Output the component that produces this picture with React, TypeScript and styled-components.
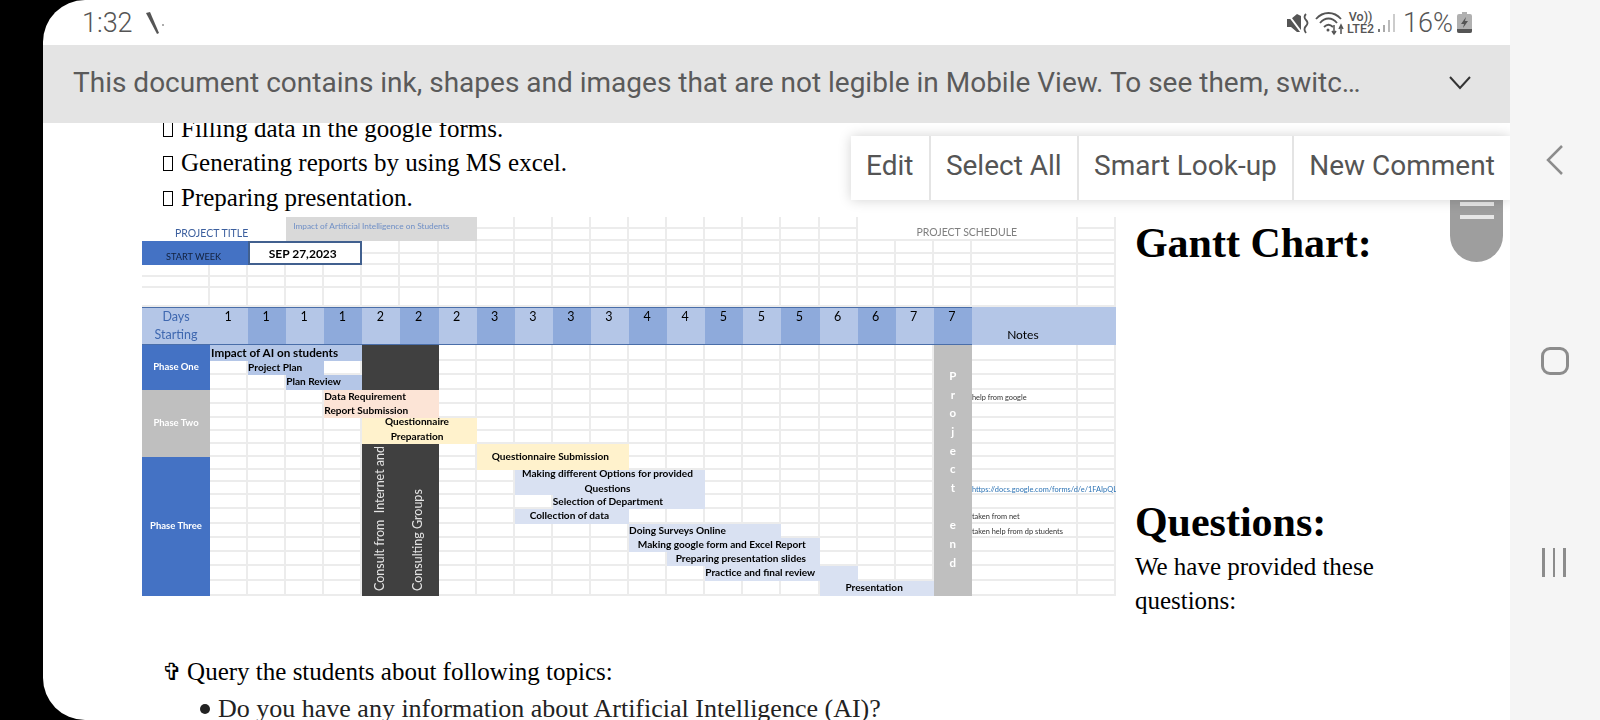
import React from 'react';
import styled, { createGlobalStyle } from 'styled-components';

const GRID_ROWS = [12, 12, 13, 11, 12, 11, 19, 38, 16, 14, 15, 14, 14, 13, 13, 13, 13, 12, 13, 14, 15, 14, 14, 14, 15, 15];
const DAYS = [1, 1, 1, 1, 2, 2, 2, 3, 3, 3, 3, 4, 4, 5, 5, 5, 6, 6, 7, 7];
const PROJECT_END = ['P', 'r', 'o', 'j', 'e', 'c', 't', '\u00a0', 'e', 'n', 'd'];

type Bar = { col: string; row: string; bg: string; align?: string; lines: string[] };

const LIGHT = '#b4c6e7';
const PEACH = '#fce4d6';
const CREAM = '#fff2cc';
const PALE = '#d9e1f2';

const BARS: Bar[] = [
  { col: '3 / 5', row: '10 / 11', bg: LIGHT, align: 'left', lines: ['Project Plan'] },
  { col: '4 / 6', row: '11 / 12', bg: LIGHT, align: 'left', lines: ['Plan Review'] },
  { col: '5 / 8', row: '12 / 13', bg: PEACH, align: 'left', lines: ['Data Requirement'] },
  { col: '5 / 8', row: '13 / 14', bg: PEACH, align: 'left', lines: ['Report Submission'] },
  { col: '6 / 9', row: '14 / 16', bg: CREAM, lines: ['Questionnaire', 'Preparation'] },
  { col: '9 / 13', row: '16 / 18', bg: CREAM, lines: ['Questionnaire Submission'] },
  { col: '10 / 15', row: '18 / 20', bg: PALE, lines: ['Making different Options for provided', 'Questions'] },
  { col: '11 / 15', row: '20 / 21', bg: PALE, align: 'left', lines: ['Selection of Department'] },
  { col: '10 / 13', row: '21 / 22', bg: PALE, lines: ['Collection of data'] },
  { col: '13 / 17', row: '22 / 23', bg: PALE, align: 'left', lines: ['Doing Surveys Online'] },
  { col: '13 / 18', row: '23 / 24', bg: PALE, lines: ['Making google form and Excel Report'] },
  { col: '14 / 18', row: '24 / 25', bg: PALE, lines: ['Preparing presentation slides'] },
  { col: '15 / 19', row: '25 / 26', bg: PALE, align: 'left', lines: ['Practice and final review'] },
  { col: '18 / 21', row: '26 / 27', bg: PALE, lines: ['Presentation'] },
];

const NOTES = [
  { row: '12 / 13', text: 'help from google' },
  { row: '19 / 20', text: 'https://docs.google.com/forms/d/e/1FAIpQLSc', link: true },
  { row: '21 / 22', text: 'taken from net' },
  { row: '22 / 23', text: 'taken help from dp students' },
];

const GlobalStyle = createGlobalStyle`
  html, body {
    margin: 0;
    height: 720px;
    background: #000;
    overflow: hidden;
  }
`;

const Screen = styled.div`
  display: flex;
  width: 1557px;
  height: 720px;
  margin-left: 43px;
  background: #fff;
  border-radius: 42px 0 0 42px;
  overflow: hidden;
  font-family: Roboto, sans-serif;
`;

const Main = styled.div`
  display: flex;
  flex-direction: column;
  width: 1467px;
  flex: none;
`;

const StatusBar = styled.div`
  display: flex;
  align-items: center;
  height: 45px;
  flex: none;
  padding: 0 38px 0 39px;
  color: #555;
`;

const Clock = styled.span`
  font-size: 27px;
  font-weight: 300;
  margin-right: 11px;
`;

const StatusRight = styled.div`
  display: flex;
  align-items: center;
  margin-left: auto;
`;

const Volte = styled.span`
  display: flex;
  flex-direction: column;
  align-items: center;
  font-size: 12.5px;
  font-weight: 500;
  line-height: 12px;
  margin: 0 3px 0 0;
`;

const Percent = styled.span`
  font-size: 27px;
  font-weight: 300;
  margin: 0 4px 0 8px;
`;

const Banner = styled.div`
  display: flex;
  align-items: center;
  justify-content: space-between;
  box-sizing: border-box;
  height: 78px;
  flex: none;
  padding: 0 39px 3px 30px;
  background: #e4e4e4;
  color: #5a5a5a;
  font-size: 28px;
  position: relative;
  z-index: 2;
`;

const Doc = styled.div`
  position: relative;
  flex: 1;
  overflow: hidden;
  color: #000;
  font-family: 'Liberation Serif', serif;
`;

const TopList = styled.div`
  margin: -11px 0 0 121px;
  font-size: 25px;
  line-height: 34.4px;
`;

const Tofu = styled.span`
  display: inline-block;
  box-sizing: border-box;
  width: 10px;
  height: 15px;
  margin: 0 8px 0 -1px;
  border: 1px solid #000;
`;

const ChartRow = styled.div`
  display: flex;
  align-items: flex-start;
  gap: 19px;
  margin: 2px 0 0 99px;
`;

const Chart = styled.div`
  display: grid;
  grid-template-columns: 68px repeat(20, 38.1px) 106px 38px;
  grid-template-rows: ${GRID_ROWS.map((h) => `${h}px`).join(' ')};
  flex: none;
  overflow: hidden;
  font-family: Lato, sans-serif;
  color: #000;
  filter: blur(0.3px);
`;

const Cell = styled.div<{ $col: number; $row: number }>`
  grid-column: ${(p) => p.$col};
  grid-row: ${(p) => p.$row};
  border-right: 2px solid #ececec;
  border-bottom: 2px solid #ececec;
`;

const TitleCell = styled.div`
  grid-column: 1 / 4;
  grid-row: 1 / 3;
  display: flex;
  align-items: flex-end;
  padding: 0 0 2px 33px;
  background: #fff;
  color: #3c5f9e;
  font-size: 10.5px;
`;

const TitleValue = styled.div`
  grid-column: 4 / 9;
  grid-row: 1 / 3;
  padding: 4px 0 0 7px;
  background: #d9d9d9;
  color: #6f8fc6;
  font-size: 8.3px;
`;

const ScheduleCell = styled.div`
  grid-column: 19 / 23;
  grid-row: 1 / 3;
  display: flex;
  align-items: flex-end;
  justify-content: center;
  padding: 0 0 1px 0;
  background: #fff;
  border-right: 2px solid #ececec;
  border-bottom: 2px solid #ececec;
  color: #7f7f7f;
  font-size: 10.5px;
`;

const StartWeek = styled.div`
  grid-column: 1 / 3;
  grid-row: 3 / 5;
  display: flex;
  align-items: flex-end;
  padding: 0 0 3px 24px;
  background: #4472c4;
  color: #12203c;
  font-size: 9.2px;
`;

const StartDate = styled.div`
  grid-column: 3 / 6;
  grid-row: 3 / 5;
  display: flex;
  align-items: center;
  justify-content: center;
  padding-right: 5px;
  background: #fff;
  border: 2px solid #41608f;
  font-size: 12px;
  font-weight: 700;
`;

const DaysHead = styled.div`
  grid-column: 1;
  grid-row: 8;
  display: flex;
  flex-direction: column;
  align-items: center;
  background: ${LIGHT};
  border-top: 1px solid #4a6ea9;
  border-bottom: 1px solid #4a6ea9;
  color: #3f68b0;
  font-size: 12.5px;
  line-height: 18px;
`;

const DayCell = styled.div<{ $dark: boolean }>`
  grid-row: 8;
  padding-right: 2px;
  text-align: center;
  background: ${(p) => (p.$dark ? '#8eaadb' : LIGHT)};
  border-top: 1px solid #4a6ea9;
  border-bottom: 1px solid #4a6ea9;
  font-size: 12.5px;
  line-height: 17px;
`;

const NotesHead = styled.div`
  grid-column: 22 / 24;
  grid-row: 8;
  display: flex;
  align-items: flex-end;
  justify-content: center;
  padding: 0 42px 1px 0;
  background: ${LIGHT};
  font-size: 12px;
  line-height: 18px;
`;

const Phase = styled.div<{ $rows: string; $bg: string }>`
  grid-column: 1;
  grid-row: ${(p) => p.$rows};
  display: flex;
  align-items: center;
  justify-content: center;
  padding-bottom: 2px;
  background: ${(p) => p.$bg};
  color: #fff;
  font-size: 9.5px;
  font-weight: 700;
`;

const GanttBar = styled.div<{ $col: string; $row: string; $bg: string; $align?: string }>`
  grid-column: ${(p) => p.$col};
  grid-row: ${(p) => p.$row};
  display: flex;
  flex-direction: column;
  justify-content: space-around;
  padding: 0 ${(p) => (p.$align ? 0 : 5)}px 2px 0;
  text-align: ${(p) => p.$align || 'center'};
  background: ${(p) => p.$bg};
  font-size: 10.1px;
  font-weight: 700;
  line-height: 13px;
  white-space: nowrap;
`;

const TwoLineBar = styled(GanttBar)`
  justify-content: flex-start;
  gap: 1.5px;
  padding-bottom: 0;
  & > span:first-child {
    margin-top: -3px;
  }
`;

const MainBar = styled.div`
  grid-column: 2 / 6;
  grid-row: 9;
  background: ${LIGHT};
  padding-left: 1px;
  font-size: 11.7px;
  font-weight: 700;
  line-height: 14px;
`;

const DarkBlock = styled.div<{ $rows: string }>`
  grid-column: 6 / 8;
  grid-row: ${(p) => p.$rows};
  background: #404040;
`;

const VerticalLabel = styled.div<{ $col: number }>`
  grid-column: ${(p) => p.$col};
  grid-row: 16 / 27;
  display: flex;
  align-items: center;
  justify-content: flex-start;
  padding: 5px 0 0 3px;
  color: #e4e4e4;
  font-size: 12.5px;
  line-height: 14px;
  white-space: pre;
  writing-mode: vertical-rl;
  transform: rotate(180deg);
`;

const EndColumn = styled.div`
  grid-column: 21;
  grid-row: 9 / 27;
  display: flex;
  flex-direction: column;
  align-items: center;
  justify-content: center;
  padding-bottom: 2px;
  background: #bfbfbf;
  color: #fff;
  font-size: 11.5px;
  font-weight: 700;
  line-height: 18.7px;
`;

const Note = styled.div<{ $row: string; $link?: boolean }>`
  grid-column: 22 / 24;
  grid-row: ${(p) => p.$row};
  overflow: hidden;
  padding-top: 1px;
  color: ${(p) => (p.$link ? '#2e74b5' : '#333')};
  font-size: 7.4px;
  line-height: 13px;
  white-space: nowrap;
`;

const Side = styled.div`
  display: flex;
  flex-direction: column;
  width: 300px;
  flex: none;
  margin-top: -1px;
  font-size: 25px;
`;

const SideTitle = styled.h2<{ $gap?: number }>`
  margin: ${(p) => p.$gap || 0}px 0 0;
  font-size: 42px;
  font-weight: 700;
  line-height: 55px;
`;

const SideText = styled.p`
  margin: 0;
  line-height: 34px;
`;

const QueryList = styled.div`
  margin: 35px 0 0 121px;
  font-size: 25px;
  line-height: 37px;
`;

const CrossMark = styled.span`
  font-family: 'DejaVu Sans', sans-serif;
  font-size: 24px;
  line-height: 1;
  margin: 0 5px 0 -2px;
`;

const BulletLine = styled.div`
  display: flex;
  align-items: center;
  margin-left: 36px;
  color: #222;
  font-size: 26px;
`;

const Dot = styled.span`
  width: 10px;
  height: 10px;
  margin-right: 8px;
  border-radius: 50%;
  background: #222;
`;

const Thumb = styled.div`
  position: absolute;
  top: 67px;
  right: 7px;
  display: flex;
  flex-direction: column;
  align-items: center;
  gap: 9px;
  box-sizing: border-box;
  width: 53px;
  height: 72px;
  padding-top: 12px;
  background: #9e9e9e;
  border-radius: 0 0 27px 27px;
`;

const ThumbLine = styled.span`
  width: 34px;
  height: 4px;
  background: #e6e6e6;
`;

const Menu = styled.div`
  position: absolute;
  top: 13px;
  right: 0;
  display: flex;
  height: 64px;
  background: #fff;
  box-shadow: 0 0 12px rgba(0, 0, 0, 0.18);
  font-family: Roboto, sans-serif;
`;

const MenuItem = styled.div`
  display: flex;
  align-items: center;
  padding: 0 15.2px 5px;
  border-left: 2px solid #e4e4e4;
  color: #555;
  font-size: 28px;
  white-space: nowrap;
  &:first-child {
    border-left: 0;
  }
`;

const NavBar = styled.div`
  display: flex;
  flex-direction: column;
  align-items: center;
  justify-content: flex-start;
  flex: 1;
  padding-top: 144px;
  background: #f5f5f5;
`;

const NavSquare = styled.span`
  box-sizing: border-box;
  width: 28px;
  height: 28px;
  margin-top: 171px;
  border: 3px solid #8c8c8c;
  border-radius: 9px;
`;

const NavLines = styled.div`
  display: flex;
  gap: 8px;
  margin: 173px 2px 0 0;
`;

const NavLine = styled.span`
  width: 2.5px;
  height: 29px;
  background: #8c8c8c;
`;

const App = () => (
  <>
    <GlobalStyle />
    <Screen>
      <Main>
        <StatusBar>
          <Clock>1:32</Clock>
          <svg width="22" height="24" viewBox="0 0 22 24">
            <path d="M2 2 L6 1 L15 22 L13 23 Z" fill="#555" />
            <circle cx="19" cy="14" r="1.1" fill="#999" />
          </svg>
          <StatusRight>
            <svg width="24" height="24" viewBox="0 0 24 24">
              <path d="M1 8 H5 L11 3 L15 5 V21 L11 21 L5 16 H1 Z" fill="#555" />
              <path d="M1 2 L16 22" stroke="#fff" strokeWidth="2" />
              <path d="M20 3 Q17 6 20 9 Q23 12 20 15 Q17 18 20 22" fill="none" stroke="#555" strokeWidth="1.8" />
            </svg>
            <svg width="32" height="26" viewBox="0 0 32 26" style={{ marginLeft: 5 }}>
              <g fill="none" stroke="#555" strokeWidth="1.8">
                <path d="M1 9 C8 1 19 1 26 9" />
                <path d="M5 13 C10 7 17 7 22 13" />
                <path d="M9 17 C12 14 15 14 18 17" />
              </g>
              <circle cx="13" cy="20" r="1.5" fill="#555" />
              <path d="M19 15 V23 M17 21 L19 24 L21 21 M26 24 V16 M24 19 L26 15 L28 19" fill="none" stroke="#555" strokeWidth="1.5" />
            </svg>
            <Volte>
              <span>Vo))</span>
              <span>LTE2</span>
            </Volte>
            <svg width="18" height="20" viewBox="0 0 18 20">
              <rect x="1" y="16" width="2" height="3" fill="#777" />
              <rect x="6" y="12" width="2" height="7" fill="#aaa" />
              <rect x="11" y="7" width="2" height="12" fill="#bbb" />
              <rect x="16" y="1" width="2" height="18" fill="#ccc" />
            </svg>
            <Percent>16%</Percent>
            <svg width="15" height="21" viewBox="0 0 15 21">
              <path d="M5 0 H10 V2 H13 Q15 2 15 4 V19 Q15 21 13 21 H2 Q0 21 0 19 V4 Q0 2 2 2 H5 Z" fill="#b0b0b0" />
              <path d="M0 17 H15 V19 Q15 21 13 21 H2 Q0 21 0 19 Z" fill="#555" />
              <path d="M9 5 L4 12 H7 L6 16 L11 9 H8 Z" fill="#555" />
            </svg>
          </StatusRight>
        </StatusBar>

        <Banner>
          <span>This document contains ink, shapes and images that are not legible in Mobile View. To see them, switc…</span>
          <svg width="22" height="14" viewBox="0 0 22 14">
            <path d="M1 1 L11 12 L21 1" fill="none" stroke="#333" strokeWidth="2" />
          </svg>
        </Banner>

        <Doc>
          <TopList>
            <div><Tofu />Filling data in the google forms.</div>
            <div><Tofu />Generating reports by using MS excel.</div>
            <div><Tofu />Preparing presentation.</div>
          </TopList>

          <ChartRow>
            <Chart>
              {GRID_ROWS.map((_, r) =>
                Array.from({ length: 23 }, (_c, c) => <Cell key={`${r}-${c}`} $col={c + 1} $row={r + 1} />),
              )}
              <TitleCell>PROJECT TITLE</TitleCell>
              <TitleValue>Impact of Artificial Intelligence on Students</TitleValue>
              <ScheduleCell>PROJECT SCHEDULE</ScheduleCell>
              <StartWeek>START WEEK</StartWeek>
              <StartDate>SEP 27,2023</StartDate>

              <DaysHead>
                <span>Days</span>
                <span>Starting</span>
              </DaysHead>
              {DAYS.map((d, i) => (
                <DayCell key={i} $dark={i % 2 === 1} style={{ gridColumn: i + 2 }}>
                  {d}
                </DayCell>
              ))}
              <NotesHead>Notes</NotesHead>

              <Phase $rows="9 / 12" $bg="#4472c4">Phase One</Phase>
              <Phase $rows="12 / 17" $bg="#bfbfbf">Phase Two</Phase>
              <Phase $rows="17 / 27" $bg="#4472c4">Phase Three</Phase>

              <MainBar>Impact of AI on students</MainBar>
              <DarkBlock $rows="9 / 12" />
              {BARS.map((b) => {
                const Row = b.lines.length > 1 ? TwoLineBar : GanttBar;
                return (
                  <Row key={b.lines[0]} $col={b.col} $row={b.row} $bg={b.bg} $align={b.align}>
                    {b.lines.map((l) => (
                      <span key={l}>{l}</span>
                    ))}
                  </Row>
                );
              })}
              <DarkBlock $rows="16 / 27" />
              <VerticalLabel $col={6}>{'Consult from  Internet and'}</VerticalLabel>
              <VerticalLabel $col={7}>Consulting Groups</VerticalLabel>
              <EndColumn>
                {PROJECT_END.map((l, i) => (
                  <span key={i}>{l}</span>
                ))}
              </EndColumn>
              {NOTES.map((n) => (
                <Note key={n.text} $row={n.row} $link={n.link}>
                  {n.text}
                </Note>
              ))}
            </Chart>

            <Side>
              <SideTitle>Gantt Chart:</SideTitle>
              <SideTitle $gap={224}>Questions:</SideTitle>
              <SideText>
                We have provided these
                <br />
                questions:
              </SideText>
            </Side>
          </ChartRow>

          <QueryList>
            <div><CrossMark>✞</CrossMark>Query the students about following topics:</div>
            <BulletLine>
              <Dot />
              <span>Do you have any information about Artificial Intelligence (AI)?</span>
            </BulletLine>
          </QueryList>

          <Thumb>
            <ThumbLine />
            <ThumbLine />
          </Thumb>
          <Menu>
            <MenuItem>Edit</MenuItem>
            <MenuItem>Select All</MenuItem>
            <MenuItem>Smart Look-up</MenuItem>
            <MenuItem>New Comment</MenuItem>
          </Menu>
        </Doc>
      </Main>

      <NavBar>
        <svg width="18" height="32" viewBox="0 0 18 32">
          <path d="M16 2 L2 16 L16 30" fill="none" stroke="#8c8c8c" strokeWidth="2.5" />
        </svg>
        <NavSquare />
        <NavLines>
          <NavLine />
          <NavLine />
          <NavLine />
        </NavLines>
      </NavBar>
    </Screen>
  </>
);

export default App;
